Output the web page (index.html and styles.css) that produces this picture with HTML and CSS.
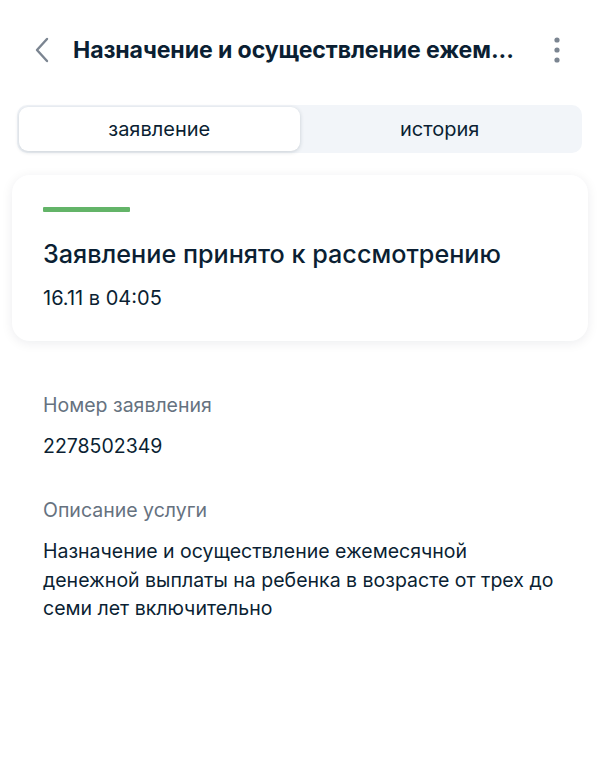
FILE: index.html
```html
<!DOCTYPE html>
<html lang="ru">
<head>
<meta charset="utf-8">
<link rel="stylesheet" href="styles.css">
</head>
<body>
<div class="page">
  <header class="topbar">
    <svg class="back" width="20" height="26" viewBox="0 0 20 26"><path d="M15 2 L5 13 L15 24" fill="none" stroke="#7b8591" stroke-width="2.4" stroke-linecap="round" stroke-linejoin="round"/></svg>
    <h1 class="title">Назначение и осуществление ежем...</h1>
    <svg class="kebab" width="10" height="28" viewBox="0 0 10 28"><circle cx="5" cy="4" r="2.6" fill="#7b8591"/><circle cx="5" cy="14" r="2.6" fill="#7b8591"/><circle cx="5" cy="24" r="2.6" fill="#7b8591"/></svg>
  </header>

  <div class="tabs">
    <div class="tab active">заявление</div>
    <div class="tab">история</div>
  </div>

  <section class="card">
    <div class="status-bar"></div>
    <h2 class="status">Заявление принято к рассмотрению</h2>
    <div class="date">16.11 в 04:05</div>
  </section>

  <section class="info">
    <div class="field">
      <div class="label">Номер заявления</div>
      <div class="value">2278502349</div>
    </div>
    <div class="field">
      <div class="label">Описание услуги</div>
      <div class="value para">Назначение и осуществление ежемесячной денежной выплаты на ребенка в возрасте от трех до семи лет включительно</div>
    </div>
  </section>
</div>
</body>
</html>
```

FILE: styles.css
```css
* { box-sizing: border-box; }
html, body { margin: 0; padding: 0; background: #ffffff; }
body {
  font-family: Inter, "Noto Sans", "Liberation Sans", sans-serif;
  color: #0b1f33;
  width: 600px;
  height: 769px;
  overflow: hidden;
}
.topbar {
  display: flex;
  align-items: center;
  height: 50px;
  margin-top: 25px;
  padding: 0 38px 0 32px;
}
.back { flex: none; }
.title {
  flex: 1;
  margin: 0 0 0 21px;
  font-size: 23.1px;
  font-weight: 700;
  letter-spacing: -0.1px;
  white-space: nowrap;
}
.kebab { flex: none; }

.tabs {
  display: flex;
  margin: 30px 18px 0 17px;
  height: 48px;
  padding: 2px;
  background: #f2f5f9;
  border-radius: 10px;
}
.tab {
  flex: 1;
  display: flex;
  align-items: center;
  justify-content: center;
  font-size: 20px;
  color: #0b1f33;
}
.tab.active {
  background: #ffffff;
  border-radius: 9px;
  box-shadow: 0 1px 4px rgba(11, 31, 51, 0.18);
}

.card {
  margin: 22px 12px 0 12px;
  padding: 32px 31px 30px 31px;
  background: #ffffff;
  border-radius: 18px;
  box-shadow: 0 2px 12px rgba(11, 31, 51, 0.08);
}
.status-bar {
  width: 87px;
  height: 5px;
  background: #63b468;
  border-radius: 1px;
}
.status {
  margin: 26px 0 0 0;
  font-size: 25.2px;
  font-weight: 500;
  line-height: 32px;
}
.date {
  margin-top: 15px;
  font-size: 20px;
  line-height: 26px;
}

.info {
  padding: 51px 43px 0 43px;
}
.field { margin-bottom: 38px; }
.label {
  font-size: 19.5px;
  line-height: 26px;
  color: #66727f;
}
.value {
  margin-top: 15px;
  font-size: 19.5px;
  line-height: 26px;
}
.value.para { line-height: 28.5px; margin-top: 14px; }
```
